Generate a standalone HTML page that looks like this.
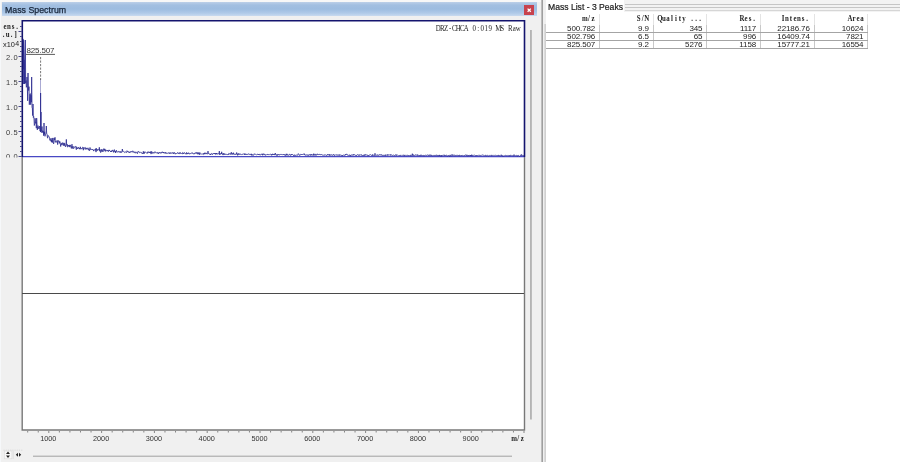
<!DOCTYPE html>
<html><head><meta charset="utf-8"><title>Mass Spectrum</title>
<style>
html,body{margin:0;padding:0;}
body{width:900px;height:462px;overflow:hidden;background:#f0f0f0;font-family:"Liberation Sans",sans-serif;position:relative;}
.abs{position:absolute;}
#ltitle{left:2px;top:2.2px;width:535px;height:14.3px;background:linear-gradient(#bccfe8 0%,#a2bfe1 22%,#9dbce0 50%,#b0cae8 80%,#c8daef 100%);}
#ltitle span{position:absolute;left:3px;top:3.3px;font-size:8.8px;line-height:11px;color:#17253a;-webkit-text-stroke:0.25px #17253a;white-space:pre;}
#close{left:524px;top:4.5px;width:10.4px;height:10px;background:#c7424d;}
#right{left:546px;top:0;width:354px;height:462px;background:#fff;}
#rtitle{left:548px;top:1.6px;font-size:8.6px;line-height:11px;color:#1c1c1c;-webkit-text-stroke:0.2px #1c1c1c;white-space:pre;}
.grip{left:625px;width:275px;height:1.2px;background:#c6c6c6;}
table{border-collapse:collapse;position:absolute;left:546px;top:13.8px;font-size:8px;color:#222;table-layout:fixed;width:322px;}
td,th{height:8px;line-height:8px;padding:0 4px 0 0;text-align:right;font-weight:normal;white-space:pre;overflow:hidden;letter-spacing:-0.12px;}
th{height:11px;line-height:11px;font-family:"Liberation Mono",monospace;font-size:7.4px;letter-spacing:-0.45px;border-right:1px solid #e4e4e4;}
td{border-right:1px solid #c8c8c8;border-bottom:1px solid #a4a4a4;height:7px;line-height:7px;}
svg text{font-family:"Liberation Sans",sans-serif;}
#wrap{position:absolute;left:0;top:0;width:900px;height:462px;will-change:transform;}
</style></head><body><div id="wrap">
<div class="abs" style="left:0;top:0;width:541px;height:2.2px;background:#f7f7f7"></div><div class="abs" style="left:0;top:0;width:1.2px;height:462px;background:#f6f8fa"></div><div class="abs" id="ltitle"><span>Mass Spectrum</span></div>
<div class="abs" id="close"><svg width="10.4" height="10" style="position:absolute;left:0;top:0"><path d="M3.6,3.6 L6.8,6.8 M6.8,3.6 L3.6,6.8" stroke="#fff" stroke-width="1.3"/></svg></div>
<svg class="abs" style="left:0;top:0" width="546" height="462" viewBox="0 0 546 462">
 <rect x="22" y="20.5" width="502.5" height="409.5" fill="#fff"/>
 <!-- lower grey frame -->
 <path d="M22.2,157 V430 H524.5 V157" fill="none" stroke="#787878" stroke-width="1.4"/>
 <line x1="22" y1="293.5" x2="524" y2="293.5" stroke="#4a4a4a" stroke-width="1.2"/>
 <!-- baseline -->
 <line x1="22" y1="156.7" x2="525" y2="156.7" stroke="#4848c4" stroke-width="1.3"/>
 <!-- spectrum -->
 <path d="M23.00,56.6 L23.33,40.5 L23.67,69.3 L24.00,59.8 L24.33,78.1 L24.67,83.5 L25.00,59.6 L25.33,40.0 L25.67,83.1 L26.00,80.5 L26.33,87.3 L26.67,85.9 L27.00,77.0 L27.33,85.9 L27.67,100.8 L28.00,73.0 L28.33,86.0 L28.67,90.5 L29.00,86.7 L29.33,104.7 L29.67,96.3 L30.00,93.9 L30.33,93.6 L30.67,104.7 L31.00,95.2 L31.33,102.2 L31.67,77.0 L32.00,107.4 L32.33,108.0 L32.67,115.6 L33.00,104.0 L33.33,117.5 L33.67,116.4 L34.00,119.0 L34.33,125.5 L34.67,123.4 L35.00,118.2 L35.33,118.8 L35.67,123.4 L36.00,121.9 L36.33,128.2 L36.67,118.1 L37.00,123.9 L37.33,129.9 L37.67,126.7 L38.00,125.6 L38.33,128.4 L38.67,127.6 L39.00,128.8 L39.33,126.0 L39.67,127.1 L40.00,131.1 L40.33,130.2 L40.67,129.8 L41.00,131.3 L41.33,130.0 L41.67,129.8 L42.00,126.5 L42.33,131.8 L42.67,130.7 L43.00,133.0 L43.33,131.4 L43.67,135.7 L44.00,123.0 L44.33,134.3 L44.67,131.8 L45.00,136.3 L45.33,134.0 L45.67,133.9 L46.00,133.3 L46.33,126.0 L46.67,133.6 L47.00,133.7 L47.33,137.1 L47.67,138.2 L48.00,135.4 L48.33,136.0 L48.67,136.0 L49.00,136.7 L49.33,137.1 L49.67,138.8 L50.00,140.4 L50.33,138.5 L50.67,138.9 L51.00,141.3 L51.33,140.0 L51.67,142.2 L52.00,138.1 L52.33,142.5 L52.67,141.0 L53.00,137.9 L53.33,143.1 L53.67,143.9 L54.00,142.0 L54.33,138.3 L54.67,139.9 L55.00,137.3 L55.33,141.7 L55.67,141.3 L56.00,142.6 L56.33,141.0 L56.67,140.9 L57.00,141.1 L57.33,140.6 L57.67,144.6 L58.00,140.7 L58.33,141.4 L58.67,140.6 L59.00,141.2 L59.33,143.4 L59.67,141.5 L60.00,141.5 L60.33,143.8 L60.67,146.5 L61.00,144.4 L61.33,143.2 L61.67,144.8 L62.00,145.0 L62.33,142.6 L62.67,143.8 L63.00,144.7 L63.33,145.6 L63.67,143.0 L64.00,142.7 L64.33,145.7 L64.67,143.3 L65.00,144.5 L65.33,146.4 L65.67,147.0 L66.00,144.8 L66.33,139.4 L66.67,145.0 L67.00,145.6 L67.33,144.4 L67.67,147.1 L68.00,147.0 L68.33,145.3 L68.67,146.1 L69.00,145.0 L69.33,145.0 L69.67,147.1 L70.00,145.1 L70.33,145.0 L70.67,146.7 L71.00,146.7 L71.33,148.4 L71.67,145.9 L72.00,144.2 L72.33,148.5 L72.67,147.1 L73.00,146.1 L73.33,147.6 L73.67,148.7 L74.00,147.2 L74.33,147.4 L74.67,146.7 L75.00,146.4 L75.33,146.5 L75.67,146.3 L76.00,148.3 L76.33,149.7 L76.67,146.8 L77.00,147.1 L77.33,147.7 L77.67,149.0 L78.00,148.4 L78.33,148.0 L78.67,147.2 L79.00,148.2 L79.33,149.1 L79.67,148.1 L80.00,149.2 L80.33,146.8 L80.67,148.2 L81.00,149.1 L81.33,148.5 L81.67,149.1 L82.00,148.4 L82.33,148.4 L82.67,147.2 L83.00,147.5 L83.33,150.2 L83.67,147.9 L84.00,147.2 L84.33,148.5 L84.67,148.8 L85.00,148.9 L85.33,149.4 L85.67,147.5 L86.00,147.8 L86.33,148.8 L86.67,148.2 L87.00,149.5 L87.33,148.3 L87.67,148.6 L88.00,147.8 L88.33,148.3 L88.67,150.1 L89.00,149.3 L89.33,150.8 L89.67,150.0 L90.00,147.5 L90.33,149.0 L90.67,149.7 L91.00,149.5 L91.33,149.1 L91.67,149.4 L92.00,150.0 L92.33,149.1 L92.67,149.6 L93.00,149.3 L93.33,149.8 L93.67,151.1 L94.00,149.9 L94.33,149.7 L94.67,149.8 L95.00,150.4 L95.33,150.2 L95.67,148.7 L96.00,152.1 L96.33,148.3 L96.67,149.4 L97.00,150.6 L97.33,149.4 L97.67,150.3 L98.00,150.3 L98.33,149.9 L98.67,149.5 L99.00,150.1 L99.33,147.3 L99.67,151.2 L100.00,149.6 L100.33,151.2 L100.67,152.6 L101.00,150.5 L101.33,149.3 L101.67,151.1 L102.00,151.8 L102.33,149.6 L102.67,150.4 L103.00,151.8 L103.33,149.9 L103.67,148.7 L104.00,149.7 L104.33,150.4 L104.67,148.8 L105.00,151.2 L105.33,151.5 L105.67,149.6 L106.00,150.7 L106.33,150.6 L106.67,150.8 L107.00,150.8 L107.33,150.1 L107.67,151.1 L108.00,150.6 L108.33,151.7 L108.67,151.2 L109.00,149.9 L109.33,151.0 L109.67,150.4 L110.00,150.6 L110.33,151.2 L110.67,152.0 L111.00,151.0 L111.33,151.9 L111.67,150.7 L112.00,151.4 L112.33,150.1 L112.67,150.0 L113.00,151.2 L113.33,151.0 L113.67,152.4 L114.00,150.3 L114.33,149.6 L114.67,151.4 L115.00,152.1 L115.33,151.0 L115.67,153.0 L116.00,151.6 L116.33,150.2 L116.67,151.6 L117.00,152.0 L117.33,152.0 L117.67,151.9 L118.00,151.6 L118.33,152.1 L118.67,151.4 L119.00,151.5 L119.33,152.4 L119.67,151.7 L120.00,152.1 L120.33,151.4 L120.67,152.6 L121.00,152.0 L121.33,152.5 L121.67,151.7 L122.00,152.1 L122.33,149.0 L122.67,151.2 L123.00,151.5 L123.33,151.1 L123.67,151.3 L124.00,152.2 L124.33,152.5 L124.67,152.3 L125.00,151.8 L125.33,151.7 L125.67,152.1 L126.00,152.7 L126.33,152.6 L126.67,151.9 L127.00,150.7 L127.33,151.3 L127.67,151.9 L128.00,151.3 L128.33,152.3 L128.67,151.8 L129.00,152.1 L129.33,152.9 L129.67,151.9 L130.00,151.6 L130.33,151.8 L130.67,152.4 L131.00,151.1 L131.33,151.7 L131.67,151.6 L132.00,151.3 L132.33,151.4 L132.67,150.8 L133.00,152.6 L133.33,152.3 L133.67,151.6 L134.00,151.8 L134.33,152.4 L134.67,152.6 L135.00,151.7 L135.33,153.2 L135.67,152.6 L136.00,152.6 L136.33,152.4 L136.67,152.3 L137.00,152.1 L137.33,153.7 L137.67,152.9 L138.00,151.6 L138.33,152.0 L138.67,151.4 L139.00,151.8 L139.33,152.6 L139.67,152.6 L140.00,152.3 L140.33,151.9 L140.67,152.3 L141.00,153.0 L141.33,152.7 L141.67,153.0 L142.00,152.8 L142.33,153.7 L142.67,153.0 L143.00,153.5 L143.33,151.3 L143.67,153.5 L144.00,152.8 L144.33,153.5 L144.67,151.9 L145.00,151.7 L145.33,152.3 L145.67,152.2 L146.00,152.4 L146.33,152.6 L146.67,153.2 L147.00,153.4 L147.33,153.4 L147.67,151.8 L148.00,152.4 L148.33,152.6 L148.67,151.7 L149.00,152.5 L149.33,152.2 L149.67,153.0 L150.00,152.0 L150.33,152.8 L150.67,151.5 L151.00,154.1 L151.33,153.2 L151.67,151.4 L152.00,152.3 L152.33,153.4 L152.67,152.9 L153.00,152.2 L153.33,153.3 L153.67,152.7 L154.00,153.0 L154.33,153.0 L154.67,152.9 L155.00,151.6 L155.33,152.4 L155.67,152.8 L156.00,152.8 L156.33,152.9 L156.67,152.7 L157.00,153.1 L157.33,152.3 L157.67,152.5 L158.00,153.8 L158.33,153.5 L158.67,154.0 L159.00,152.2 L159.33,152.7 L159.67,152.2 L160.00,152.7 L160.33,153.3 L160.67,153.1 L161.00,152.3 L161.33,153.0 L161.67,153.2 L162.00,151.9 L162.33,151.8 L162.67,152.3 L163.00,153.0 L163.33,152.0 L163.67,153.0 L164.00,153.1 L164.33,152.5 L164.67,153.3 L165.00,152.5 L165.33,152.7 L165.67,152.2 L166.00,153.8 L166.33,153.4 L166.67,152.8 L167.00,152.9 L167.33,153.1 L167.67,153.4 L168.00,153.3 L168.33,153.2 L168.67,152.7 L169.00,152.7 L169.33,153.7 L169.67,152.8 L170.00,152.9 L170.33,153.6 L170.67,152.6 L171.00,153.1 L171.33,152.9 L171.67,153.4 L172.00,152.7 L172.33,152.7 L172.67,152.8 L173.00,152.8 L173.33,153.8 L173.67,152.6 L174.00,153.6 L174.33,152.6 L174.67,152.5 L175.00,153.4 L175.33,154.2 L175.67,153.5 L176.00,153.5 L176.33,154.0 L176.67,153.6 L177.00,153.6 L177.33,152.8 L177.67,152.5 L178.00,152.4 L178.33,153.7 L178.67,153.4 L179.00,153.0 L179.33,153.9 L179.67,153.6 L180.00,152.2 L180.33,153.1 L180.67,153.6 L181.00,153.0 L181.33,153.3 L181.67,153.6 L182.00,153.7 L182.33,153.9 L182.67,152.5 L183.00,152.8 L183.33,153.9 L183.67,152.9 L184.00,153.4 L184.33,152.7 L184.67,152.6 L185.00,153.2 L185.33,153.9 L185.67,153.8 L186.00,153.7 L186.33,154.2 L186.67,152.4 L187.00,153.5 L187.33,154.1 L187.67,153.2 L188.00,154.0 L188.33,153.6 L188.67,152.7 L189.00,153.2 L189.33,154.2 L189.67,154.0 L190.00,153.3 L190.33,153.4 L190.67,153.6 L191.00,153.4 L191.33,153.5 L191.67,153.1 L192.00,152.5 L192.33,153.1 L192.67,153.2 L193.00,154.0 L193.33,153.6 L193.67,154.2 L194.00,153.5 L194.33,153.8 L194.67,153.2 L195.00,153.6 L195.33,152.6 L195.67,153.2 L196.00,152.9 L196.33,152.6 L196.67,153.4 L197.00,152.4 L197.33,154.2 L197.67,154.0 L198.00,152.6 L198.33,153.4 L198.67,154.1 L199.00,152.5 L199.33,154.8 L199.67,153.3 L200.00,152.7 L200.33,153.8 L200.67,154.1 L201.00,153.8 L201.33,154.0 L201.67,153.9 L202.00,153.7 L202.33,153.8 L202.67,154.1 L203.00,154.2 L203.33,154.5 L203.67,153.3 L204.00,154.2 L204.33,153.1 L204.67,154.1 L205.00,152.6 L205.33,153.0 L205.67,153.9 L206.00,153.8 L206.33,153.8 L206.67,152.9 L207.00,153.8 L207.33,154.2 L207.67,153.4 L208.00,151.1 L208.33,153.6 L208.67,153.3 L209.00,154.1 L209.33,154.1 L209.67,154.2 L210.00,154.4 L210.33,153.9 L210.67,155.0 L211.00,154.0 L211.33,153.5 L211.67,153.3 L212.00,153.7 L212.33,154.7 L212.67,154.2 L213.00,153.9 L213.33,153.2 L213.67,153.7 L214.00,153.7 L214.33,153.0 L214.67,153.9 L215.00,154.0 L215.33,153.1 L215.67,154.5 L216.00,154.2 L216.33,153.0 L216.67,154.2 L217.00,153.3 L217.33,154.1 L217.67,154.1 L218.00,154.0 L218.33,153.7 L218.67,153.9 L219.00,154.1 L219.33,151.1 L219.67,154.8 L220.00,153.9 L220.33,154.3 L220.67,153.9 L221.00,153.0 L221.33,154.1 L221.67,151.8 L222.00,154.0 L222.33,154.0 L222.67,153.7 L223.00,155.1 L223.33,153.8 L223.67,153.2 L224.00,154.6 L224.33,153.6 L224.67,154.4 L225.00,154.9 L225.33,154.5 L225.67,153.9 L226.00,154.0 L226.33,154.4 L226.67,154.3 L227.00,154.2 L227.33,154.5 L227.67,154.0 L228.00,154.5 L228.33,154.9 L228.67,153.5 L229.00,153.8 L229.33,153.8 L229.67,154.1 L230.00,153.5 L230.33,154.5 L230.67,153.5 L231.00,153.2 L231.33,152.2 L231.67,154.3 L232.00,153.7 L232.33,154.5 L232.67,153.5 L233.00,154.0 L233.33,152.7 L233.67,154.4 L234.00,153.7 L234.33,154.3 L234.67,154.5 L235.00,154.0 L235.33,153.9 L235.67,154.6 L236.00,154.0 L236.33,154.3 L236.67,152.5 L237.00,154.1 L237.33,153.8 L237.67,155.4 L238.00,154.0 L238.33,154.4 L238.67,153.4 L239.00,154.5 L239.33,153.8 L239.67,154.0 L240.00,154.6 L240.33,154.0 L240.67,154.0 L241.00,153.9 L241.33,154.4 L241.67,154.6 L242.00,154.5 L242.33,154.2 L242.67,154.5 L243.00,154.6 L243.33,154.0 L243.67,153.8 L244.00,154.1 L244.33,153.8 L244.67,154.9 L245.00,153.6 L245.33,154.5 L245.67,154.6 L246.00,153.9 L246.33,154.5 L246.67,154.3 L247.00,155.0 L247.33,154.7 L247.67,154.2 L248.00,153.7 L248.33,154.0 L248.67,154.0 L249.00,154.1 L249.33,154.4 L249.67,153.9 L250.00,154.8 L250.33,154.5 L250.67,154.7 L251.00,154.9 L251.33,153.8 L251.67,155.4 L252.00,154.1 L252.33,154.7 L252.67,154.9 L253.00,155.5 L253.33,154.8 L253.67,154.8 L254.00,154.6 L254.33,153.7 L254.67,154.4 L255.00,154.1 L255.33,154.3 L255.67,154.3 L256.00,154.5 L256.33,154.7 L256.67,154.7 L257.00,154.4 L257.33,154.2 L257.67,154.4 L258.00,155.0 L258.33,154.1 L258.67,154.7 L259.00,154.1 L259.33,154.2 L259.67,155.0 L260.00,155.1 L260.33,155.1 L260.67,155.0 L261.00,154.1 L261.33,153.9 L261.67,154.5 L262.00,154.1 L262.33,154.0 L262.67,155.3 L263.00,153.8 L263.33,154.4 L263.67,153.9 L264.00,153.7 L264.33,155.0 L264.67,154.7 L265.00,154.3 L265.33,155.3 L265.67,155.1 L266.00,155.1 L266.33,154.7 L266.67,155.1 L267.00,154.5 L267.33,154.4 L267.67,154.8 L268.00,154.1 L268.33,154.7 L268.67,154.6 L269.00,154.3 L269.33,154.6 L269.67,154.5 L270.00,154.7 L270.33,154.4 L270.67,154.3 L271.00,154.6 L271.33,155.3 L271.67,154.2 L272.00,155.2 L272.33,154.8 L272.67,153.8 L273.00,154.9 L273.33,154.3 L273.67,155.0 L274.00,154.5 L274.33,155.1 L274.67,154.1 L275.00,154.4 L275.33,153.1 L275.67,154.8 L276.00,154.7 L276.33,155.1 L276.67,154.5 L277.00,155.9 L277.33,155.2 L277.67,154.3 L278.00,154.1 L278.33,154.6 L278.67,155.1 L279.00,154.2 L279.33,154.9 L279.67,155.0 L280.00,154.8 L280.33,154.5 L280.67,154.5 L281.00,154.0 L281.33,154.6 L281.67,154.5 L282.00,154.8 L282.33,154.7 L282.67,154.9 L283.00,154.3 L283.33,154.5 L283.67,155.0 L284.00,154.3 L284.33,154.8 L284.67,155.3 L285.00,154.4 L285.33,155.2 L285.67,155.7 L286.00,155.5 L286.33,153.8 L286.67,155.2 L287.00,154.4 L287.33,154.2 L287.67,155.3 L288.00,155.0 L288.33,154.9 L288.67,155.4 L289.00,154.6 L289.33,154.7 L289.67,154.2 L290.00,154.2 L290.33,154.7 L290.67,155.6 L291.00,155.3 L291.33,154.1 L291.67,154.8 L292.00,154.4 L292.33,154.9 L292.67,154.4 L293.00,154.9 L293.33,155.4 L293.67,155.6 L294.00,156.1 L294.33,154.9 L294.67,154.9 L295.00,155.1 L295.33,155.6 L295.67,155.0 L296.00,155.0 L296.33,155.0 L296.67,155.2 L297.00,154.9 L297.33,154.8 L297.67,155.4 L298.00,154.7 L298.33,153.6 L298.67,154.2 L299.00,154.7 L299.33,154.7 L299.67,155.5 L300.00,155.5 L300.33,154.8 L300.67,154.4 L301.00,154.7 L301.33,154.0 L301.67,154.6 L302.00,155.0 L302.33,154.4 L302.67,154.5 L303.00,154.5 L303.33,154.2 L303.67,154.3 L304.00,154.5 L304.33,153.7 L304.67,155.1 L305.00,154.7 L305.33,155.2 L305.67,155.2 L306.00,155.4 L306.33,154.8 L306.67,155.0 L307.00,155.2 L307.33,154.7 L307.67,155.2 L308.00,155.8 L308.33,154.7 L308.67,155.3 L309.00,155.2 L309.33,155.0 L309.67,154.5 L310.00,155.1 L310.33,155.5 L310.67,154.4 L311.00,154.3 L311.33,155.3 L311.67,154.3 L312.00,155.1 L312.33,155.0 L312.67,155.2 L313.00,154.7 L313.33,155.4 L313.67,153.7 L314.00,155.3 L314.33,155.3 L314.67,154.9 L315.00,153.9 L315.33,155.2 L315.67,154.7 L316.00,155.5 L316.33,154.6 L316.67,154.8 L317.00,154.7 L317.33,153.8 L317.67,154.7 L318.00,154.7 L318.33,154.7 L318.67,154.5 L319.00,155.0 L319.33,154.3 L319.67,154.0 L320.00,154.4 L320.33,155.1 L320.67,154.6 L321.00,154.5 L321.33,154.5 L321.67,154.6 L322.00,154.6 L322.33,155.3 L322.67,155.0 L323.00,155.1 L323.33,154.9 L323.67,155.4 L324.00,155.2 L324.33,154.9 L324.67,155.2 L325.00,155.4 L325.33,154.7 L325.67,155.1 L326.00,155.0 L326.33,155.1 L326.67,155.6 L327.00,154.8 L327.33,155.0 L327.67,154.3 L328.00,155.1 L328.33,154.9 L328.67,154.7 L329.00,155.2 L329.33,154.3 L329.67,155.6 L330.00,154.7 L330.33,155.2 L330.67,155.0 L331.00,154.7 L331.33,155.3 L331.67,154.6 L332.00,155.1 L332.33,155.4 L332.67,155.1 L333.00,155.3 L333.33,154.8 L333.67,154.1 L334.00,154.7 L334.33,155.9 L334.67,155.6 L335.00,155.3 L335.33,154.8 L335.67,155.2 L336.00,154.6 L336.33,154.9 L336.67,155.0 L337.00,154.9 L337.33,155.4 L337.67,155.2 L338.00,154.5 L338.33,154.9 L338.67,155.4 L339.00,154.9 L339.33,155.6 L339.67,154.5 L340.00,154.9 L340.33,155.1 L340.67,155.1 L341.00,155.1 L341.33,155.1 L341.67,155.5 L342.00,156.1 L342.33,155.0 L342.67,155.5 L343.00,155.5 L343.33,154.9 L343.67,155.1 L344.00,155.2 L344.33,155.3 L344.67,155.5 L345.00,155.4 L345.33,154.2 L345.67,155.0 L346.00,154.7 L346.33,154.5 L346.67,153.9 L347.00,154.9 L347.33,154.7 L347.67,155.3 L348.00,155.1 L348.33,155.3 L348.67,155.3 L349.00,155.2 L349.33,155.4 L349.67,154.7 L350.00,155.8 L350.33,155.4 L350.67,156.2 L351.00,155.0 L351.33,155.1 L351.67,154.8 L352.00,155.1 L352.33,155.0 L352.67,155.2 L353.00,155.5 L353.33,154.3 L353.67,155.2 L354.00,155.0 L354.33,154.5 L354.67,155.1 L355.00,155.2 L355.33,155.4 L355.67,155.2 L356.00,155.1 L356.33,155.8 L356.67,155.1 L357.00,154.9 L357.33,154.7 L357.67,154.7 L358.00,154.6 L358.33,155.4 L358.67,155.2 L359.00,155.4 L359.33,154.6 L359.67,155.4 L360.00,155.2 L360.33,154.8 L360.67,154.8 L361.00,155.2 L361.33,154.7 L361.67,154.7 L362.00,155.7 L362.33,155.2 L362.67,155.6 L363.00,155.1 L363.33,155.4 L363.67,155.6 L364.00,154.7 L364.33,155.6 L364.67,154.7 L365.00,155.5 L365.33,155.3 L365.67,154.5 L366.00,154.6 L366.33,155.0 L366.67,155.3 L367.00,154.8 L367.33,155.2 L367.67,155.0 L368.00,156.1 L368.33,155.6 L368.67,155.1 L369.00,155.6 L369.33,155.0 L369.67,154.8 L370.00,155.0 L370.33,154.6 L370.67,154.8 L371.00,155.0 L371.33,155.4 L371.67,155.3 L372.00,155.5 L372.33,156.0 L372.67,154.5 L373.00,154.5 L373.33,155.2 L373.67,155.6 L374.00,155.5 L374.33,155.9 L374.67,154.6 L375.00,153.3 L375.33,155.1 L375.67,155.7 L376.00,155.3 L376.33,155.1 L376.67,155.2 L377.00,155.0 L377.33,155.5 L377.67,154.6 L378.00,155.2 L378.33,155.5 L378.67,155.3 L379.00,155.1 L379.33,154.5 L379.67,155.2 L380.00,154.8 L380.33,155.2 L380.67,154.7 L381.00,155.2 L381.33,154.5 L381.67,155.3 L382.00,154.9 L382.33,155.1 L382.67,155.7 L383.00,155.2 L383.33,155.0 L383.67,155.5 L384.00,155.0 L384.33,155.4 L384.67,155.1 L385.00,155.6 L385.33,154.7 L385.67,155.7 L386.00,155.6 L386.33,154.8 L386.67,155.2 L387.00,155.1 L387.33,155.4 L387.67,154.4 L388.00,155.5 L388.33,154.9 L388.67,154.8 L389.00,154.9 L389.33,154.8 L389.67,154.9 L390.00,155.4 L390.33,155.4 L390.67,154.4 L391.00,155.3 L391.33,155.2 L391.67,154.9 L392.00,155.0 L392.33,155.2 L392.67,155.7 L393.00,155.2 L393.33,155.1 L393.67,154.9 L394.00,155.5 L394.33,155.6 L394.67,155.4 L395.00,155.8 L395.33,155.2 L395.67,155.0 L396.00,154.4 L396.33,155.7 L396.67,155.2 L397.00,155.1 L397.33,155.0 L397.67,155.3 L398.00,155.5 L398.33,155.6 L398.67,155.2 L399.00,155.6 L399.33,155.5 L399.67,155.4 L400.00,155.0 L400.33,155.7 L400.67,155.1 L401.00,155.1 L401.33,155.4 L401.67,155.1 L402.00,155.5 L402.33,155.4 L402.67,155.1 L403.00,155.5 L403.33,155.4 L403.67,154.9 L404.00,155.0 L404.33,156.1 L404.67,155.3 L405.00,154.9 L405.33,155.3 L405.67,155.6 L406.00,155.6 L406.33,155.8 L406.67,155.3 L407.00,155.5 L407.33,155.3 L407.67,155.0 L408.00,155.9 L408.33,155.7 L408.67,155.3 L409.00,155.7 L409.33,155.3 L409.67,155.7 L410.00,155.3 L410.33,155.0 L410.67,155.9 L411.00,155.6 L411.33,155.9 L411.67,155.3 L412.00,155.5 L412.33,153.7 L412.67,155.7 L413.00,155.4 L413.33,154.6 L413.67,155.8 L414.00,155.4 L414.33,155.5 L414.67,155.4 L415.00,155.1 L415.33,154.8 L415.67,155.4 L416.00,154.7 L416.33,155.1 L416.67,155.0 L417.00,155.7 L417.33,155.7 L417.67,154.6 L418.00,154.8 L418.33,155.7 L418.67,155.9 L419.00,155.5 L419.33,155.1 L419.67,155.7 L420.00,156.1 L420.33,155.1 L420.67,155.5 L421.00,154.7 L421.33,155.5 L421.67,155.6 L422.00,155.1 L422.33,155.7 L422.67,155.4 L423.00,155.1 L423.33,155.4 L423.67,155.2 L424.00,156.2 L424.33,155.5 L424.67,155.6 L425.00,155.2 L425.33,155.1 L425.67,155.1 L426.00,155.8 L426.33,155.5 L426.67,155.4 L427.00,154.9 L427.33,155.1 L427.67,154.8 L428.00,155.6 L428.33,155.5 L428.67,155.6 L429.00,154.8 L429.33,155.7 L429.67,155.3 L430.00,154.7 L430.33,155.6 L430.67,155.4 L431.00,154.8 L431.33,155.8 L431.67,155.2 L432.00,155.7 L432.33,155.7 L432.67,155.6 L433.00,155.4 L433.33,155.4 L433.67,155.5 L434.00,155.3 L434.33,155.9 L434.67,155.3 L435.00,155.2 L435.33,155.2 L435.67,155.8 L436.00,155.4 L436.33,155.4 L436.67,154.8 L437.00,155.6 L437.33,155.1 L437.67,155.7 L438.00,155.6 L438.33,155.8 L438.67,155.3 L439.00,155.9 L439.33,154.9 L439.67,155.8 L440.00,155.1 L440.33,155.5 L440.67,156.3 L441.00,155.9 L441.33,155.2 L441.67,156.4 L442.00,155.6 L442.33,155.0 L442.67,155.4 L443.00,155.6 L443.33,155.6 L443.67,155.1 L444.00,154.7 L444.33,155.1 L444.67,156.0 L445.00,155.6 L445.33,156.0 L445.67,155.4 L446.00,154.9 L446.33,155.2 L446.67,155.4 L447.00,155.5 L447.33,156.3 L447.67,155.8 L448.00,155.5 L448.33,155.0 L448.67,155.7 L449.00,155.6 L449.33,155.3 L449.67,156.5 L450.00,155.6 L450.33,155.8 L450.67,154.9 L451.00,155.6 L451.33,155.9 L451.67,155.5 L452.00,154.4 L452.33,155.1 L452.67,155.7 L453.00,154.8 L453.33,155.4 L453.67,155.3 L454.00,155.4 L454.33,155.7 L454.67,154.8 L455.00,155.3 L455.33,155.6 L455.67,156.0 L456.00,155.4 L456.33,155.0 L456.67,155.3 L457.00,155.9 L457.33,155.4 L457.67,155.2 L458.00,155.1 L458.33,155.5 L458.67,155.1 L459.00,156.1 L459.33,155.8 L459.67,155.0 L460.00,155.3 L460.33,155.6 L460.67,155.5 L461.00,155.6 L461.33,155.2 L461.67,155.8 L462.00,155.1 L462.33,155.4 L462.67,155.4 L463.00,155.4 L463.33,155.7 L463.67,155.7 L464.00,155.9 L464.33,155.6 L464.67,155.0 L465.00,155.5 L465.33,154.8 L465.67,155.0 L466.00,154.9 L466.33,155.0 L466.67,155.7 L467.00,154.8 L467.33,155.8 L467.67,155.9 L468.00,155.8 L468.33,155.2 L468.67,156.1 L469.00,155.6 L469.33,155.1 L469.67,155.3 L470.00,155.9 L470.33,155.0 L470.67,156.0 L471.00,155.5 L471.33,155.9 L471.67,154.7 L472.00,156.2 L472.33,155.2 L472.67,155.4 L473.00,155.8 L473.33,155.5 L473.67,155.3 L474.00,155.1 L474.33,155.2 L474.67,155.1 L475.00,155.2 L475.33,155.4 L475.67,155.9 L476.00,156.2 L476.33,155.3 L476.67,155.9 L477.00,155.3 L477.33,155.5 L477.67,155.5 L478.00,155.5 L478.33,155.4 L478.67,155.1 L479.00,155.6 L479.33,155.5 L479.67,154.9 L480.00,155.4 L480.33,155.5 L480.67,155.5 L481.00,155.4 L481.33,155.2 L481.67,155.6 L482.00,155.3 L482.33,155.0 L482.67,155.1 L483.00,155.4 L483.33,155.5 L483.67,155.0 L484.00,155.3 L484.33,155.6 L484.67,155.6 L485.00,155.6 L485.33,155.7 L485.67,154.9 L486.00,155.7 L486.33,155.9 L486.67,155.6 L487.00,155.5 L487.33,155.6 L487.67,155.2 L488.00,155.5 L488.33,156.2 L488.67,155.9 L489.00,156.1 L489.33,155.5 L489.67,155.3 L490.00,155.0 L490.33,155.3 L490.67,155.5 L491.00,155.9 L491.33,155.9 L491.67,154.9 L492.00,155.3 L492.33,155.4 L492.67,155.5 L493.00,155.4 L493.33,155.5 L493.67,155.4 L494.00,155.6 L494.33,155.5 L494.67,155.4 L495.00,155.4 L495.33,155.3 L495.67,155.3 L496.00,155.2 L496.33,155.6 L496.67,155.5 L497.00,155.6 L497.33,155.5 L497.67,155.9 L498.00,155.3 L498.33,155.9 L498.67,155.2 L499.00,155.5 L499.33,155.6 L499.67,155.5 L500.00,156.1 L500.33,155.4 L500.67,155.2 L501.00,154.8 L501.33,154.9 L501.67,155.8 L502.00,155.2 L502.33,156.2 L502.67,155.9 L503.00,156.0 L503.33,156.3 L503.67,155.7 L504.00,155.6 L504.33,155.7 L504.67,155.8 L505.00,155.4 L505.33,155.2 L505.67,155.6 L506.00,155.2 L506.33,155.4 L506.67,155.7 L507.00,155.5 L507.33,155.7 L507.67,155.3 L508.00,155.1 L508.33,155.3 L508.67,155.7 L509.00,156.2 L509.33,155.7 L509.67,155.3 L510.00,156.1 L510.33,155.4 L510.67,155.3 L511.00,155.6 L511.33,155.2 L511.67,155.5 L512.00,156.0 L512.33,155.8 L512.67,155.5 L513.00,155.5 L513.33,155.7 L513.67,156.0 L514.00,154.6 L514.33,155.6 L514.67,155.5 L515.00,155.8 L515.33,155.6 L515.67,155.7 L516.00,155.4 L516.33,155.3 L516.67,155.9 L517.00,156.0 L517.33,156.4 L517.67,155.3 L518.00,155.8 L518.33,155.5 L518.67,155.7 L519.00,155.6 L519.33,156.0 L519.67,156.5 L520.00,156.0 L520.33,155.5 L520.67,155.2 L521.00,155.8 L521.33,154.4 L521.67,155.7 L522.00,155.5 L522.33,155.4 L522.67,155.3 L523.00,155.9 L523.33,155.5 L523.67,155.6 L524.00,155.6" fill="none" stroke="#2b2b8f" stroke-width="0.8" stroke-linejoin="round"/>
 <!-- left-edge peaks (500.8 / 502.8) -->
 <path d="M23,84 V38.5 L24.2,40 L24.8,60 L25.6,78 L25.2,84 Z" fill="#2b2b8f" opacity="0.85"/>
 <!-- 825.5 peak -->
 <line x1="40.6" y1="79" x2="40.6" y2="94" stroke="#2b2b8f" stroke-width="0.8" opacity="0.55"/>
 <line x1="40.6" y1="93" x2="40.6" y2="132" stroke="#2b2b8f" stroke-width="1.1"/>
 <line x1="41.4" y1="112" x2="41.4" y2="133" stroke="#2b2b8f" stroke-width="0.7"/>
 <!-- upper blue frame -->
 <path d="M22.3,157 V20.75 H524.5 V157" fill="none" stroke="#14146e" stroke-width="1.6"/>
 <g stroke="#14146e" stroke-width="0.75"><line x1="18.5" y1="156.5" x2="21.6" y2="156.5"/><line x1="20" y1="151.5" x2="21.6" y2="151.5"/><line x1="20" y1="146.5" x2="21.6" y2="146.5"/><line x1="20" y1="141.5" x2="21.6" y2="141.5"/><line x1="20" y1="136.5" x2="21.6" y2="136.5"/><line x1="18.5" y1="131.5" x2="21.6" y2="131.5"/><line x1="20" y1="126.5" x2="21.6" y2="126.5"/><line x1="20" y1="121.5" x2="21.6" y2="121.5"/><line x1="20" y1="116.5" x2="21.6" y2="116.5"/><line x1="20" y1="111.5" x2="21.6" y2="111.5"/><line x1="18.5" y1="106.5" x2="21.6" y2="106.5"/><line x1="20" y1="101.5" x2="21.6" y2="101.5"/><line x1="20" y1="96.5" x2="21.6" y2="96.5"/><line x1="20" y1="91.5" x2="21.6" y2="91.5"/><line x1="20" y1="86.5" x2="21.6" y2="86.5"/><line x1="18.5" y1="81.5" x2="21.6" y2="81.5"/><line x1="20" y1="76.5" x2="21.6" y2="76.5"/><line x1="20" y1="71.5" x2="21.6" y2="71.5"/><line x1="20" y1="66.5" x2="21.6" y2="66.5"/><line x1="20" y1="61.5" x2="21.6" y2="61.5"/><line x1="18.5" y1="56.5" x2="21.6" y2="56.5"/><line x1="20" y1="51.5" x2="21.6" y2="51.5"/><line x1="20" y1="46.5" x2="21.6" y2="46.5"/><line x1="20" y1="41.5" x2="21.6" y2="41.5"/><line x1="20" y1="36.5" x2="21.6" y2="36.5"/><line x1="18.5" y1="31.5" x2="21.6" y2="31.5"/><line x1="20" y1="26.5" x2="21.6" y2="26.5"/></g>
 <g fill="#858585"><rect x="27.18" y="431" width="1" height="1.5"/><rect x="37.74" y="431" width="1" height="1.5"/><rect x="48.30" y="431" width="1" height="2"/><rect x="58.86" y="431" width="1" height="1.5"/><rect x="69.42" y="431" width="1" height="1.5"/><rect x="79.98" y="431" width="1" height="1.5"/><rect x="90.54" y="431" width="1" height="1.5"/><rect x="101.10" y="431" width="1" height="2"/><rect x="111.66" y="431" width="1" height="1.5"/><rect x="122.22" y="431" width="1" height="1.5"/><rect x="132.78" y="431" width="1" height="1.5"/><rect x="143.34" y="431" width="1" height="1.5"/><rect x="153.90" y="431" width="1" height="2"/><rect x="164.46" y="431" width="1" height="1.5"/><rect x="175.02" y="431" width="1" height="1.5"/><rect x="185.58" y="431" width="1" height="1.5"/><rect x="196.14" y="431" width="1" height="1.5"/><rect x="206.70" y="431" width="1" height="2"/><rect x="217.26" y="431" width="1" height="1.5"/><rect x="227.82" y="431" width="1" height="1.5"/><rect x="238.38" y="431" width="1" height="1.5"/><rect x="248.94" y="431" width="1" height="1.5"/><rect x="259.50" y="431" width="1" height="2"/><rect x="270.06" y="431" width="1" height="1.5"/><rect x="280.62" y="431" width="1" height="1.5"/><rect x="291.18" y="431" width="1" height="1.5"/><rect x="301.74" y="431" width="1" height="1.5"/><rect x="312.30" y="431" width="1" height="2"/><rect x="322.86" y="431" width="1" height="1.5"/><rect x="333.42" y="431" width="1" height="1.5"/><rect x="343.98" y="431" width="1" height="1.5"/><rect x="354.54" y="431" width="1" height="1.5"/><rect x="365.10" y="431" width="1" height="2"/><rect x="375.66" y="431" width="1" height="1.5"/><rect x="386.22" y="431" width="1" height="1.5"/><rect x="396.78" y="431" width="1" height="1.5"/><rect x="407.34" y="431" width="1" height="1.5"/><rect x="417.90" y="431" width="1" height="2"/><rect x="428.46" y="431" width="1" height="1.5"/><rect x="439.02" y="431" width="1" height="1.5"/><rect x="449.58" y="431" width="1" height="1.5"/><rect x="460.14" y="431" width="1" height="1.5"/><rect x="470.70" y="431" width="1" height="2"/><rect x="481.26" y="431" width="1" height="1.5"/><rect x="491.82" y="431" width="1" height="1.5"/><rect x="502.38" y="431" width="1" height="1.5"/><rect x="512.94" y="431" width="1" height="1.5"/><rect x="523.50" y="431" width="1" height="2"/></g>
 <g font-size="7.3" fill="#333" text-anchor="middle"><text x="48.3" y="440.5">1000</text><text x="101.1" y="440.5">2000</text><text x="153.9" y="440.5">3000</text><text x="206.7" y="440.5">4000</text><text x="259.5" y="440.5">5000</text><text x="312.3" y="440.5">6000</text><text x="365.1" y="440.5">7000</text><text x="417.9" y="440.5">8000</text><text x="470.7" y="440.5">9000</text></g>
 <g font-size="7.5" fill="#3a3a3a">
  <text x="6" y="59.7" textLength="11.6" lengthAdjust="spacing">2.0</text><text x="6" y="84.7" textLength="11.6" lengthAdjust="spacing">1.5</text><text x="6" y="109.7" textLength="11.6" lengthAdjust="spacing">1.0</text><text x="6" y="134.7" textLength="11.6" lengthAdjust="spacing">0.5</text>
 </g>
 <!-- 0.0 clipped -->
 <svg x="0" y="150" width="19" height="7.6" viewBox="0 150 19 7.6"><text x="6" y="159.2" font-size="7.5" fill="#3a3a3a" textLength="11.6" lengthAdjust="spacing">0.0</text></svg>
 <text transform="scale(0.82,1)" x="6.10 10.98 15.85 20.73" y="29.3" font-size="8.4" fill="#222" text-anchor="middle" style="font-family:'Liberation Serif',serif;font-weight:bold">ens.</text><text transform="scale(0.82,1)" x="4.39 9.27 14.15 19.02" y="36.8" font-size="8.4" fill="#222" text-anchor="middle" style="font-family:'Liberation Serif',serif;font-weight:bold">.u.]</text>
 <text x="3" y="47" font-size="7.4" fill="#222">x10</text><text x="15.2" y="45.6" font-size="7" fill="#222">4</text>
 <!-- peak label -->
 <text x="26.5" y="53.1" font-size="8" fill="#333" letter-spacing="-0.15">825.507</text>
 <line x1="26" y1="54.4" x2="55" y2="54.4" stroke="#333" stroke-width="0.8"/>
 <line x1="40.6" y1="57" x2="40.6" y2="80" stroke="#555" stroke-width="0.8" stroke-dasharray="2.2,1.3"/>
 <text transform="scale(0.82,1)" x="534.39 539.27 544.15 549.02 553.90 558.78 563.66 568.54 573.41 578.29 583.17 588.05 592.93 597.80 602.68 607.56 612.44 617.32 622.20 627.07 631.95" y="31" font-size="8.4" fill="#222" text-anchor="middle" style="font-family:'Liberation Serif',serif">DRZ-CHCA 0:019 MS Raw</text>
 <text transform="scale(0.82,1)" x="627.07 631.95 636.83" y="440.6" font-size="8.4" fill="#222" text-anchor="middle" style="font-family:'Liberation Serif',serif;font-weight:bold">m/z</text>
 <!-- vertical slider -->
 <rect x="530.3" y="30" width="1.3" height="389.5" fill="#9a9a9a"/>
 <!-- splitter -->
 <rect x="541.5" y="0" width="1.3" height="462" fill="#8c8c8c"/>
 <rect x="544.6" y="24" width="1" height="438" fill="#bdbdbd"/>
 <!-- bottom controls -->
 <line x1="3.5" y1="450.2" x2="22.5" y2="450.2" stroke="#d4d4d4" stroke-width="0.8" stroke-dasharray="1.2,1"/>
 <rect x="4.3" y="451" width="7.6" height="7.8" fill="#f8f8f8" stroke="#dadada" stroke-width="0.6"/>
 <line x1="13.2" y1="451" x2="13.2" y2="459" stroke="#dcdcdc" stroke-width="0.8"/>
 <path d="M6,454 L8,451.6 L10,454 Z M6,455.6 L8,458 L10,455.6 Z" fill="#222"/>
 <path d="M18,452.8 L15.8,454.8 L18,456.8 Z M19,452.8 L21.2,454.8 L19,456.8 Z" fill="#222"/>
 <line x1="33" y1="456.2" x2="512" y2="456.2" stroke="#a0a0a0" stroke-width="1"/>
</svg>
<div class="abs" id="right"></div>
<div class="abs" id="rtitle">Mass List - 3 Peaks</div>
<div class="abs" style="left:624px;top:0;width:276px;height:11.5px;background:#f3f3f3"></div>
<div class="abs grip" style="top:4.1px"></div><div class="abs grip" style="top:6.8px"></div><div class="abs grip" style="top:9.5px;background:#d6d6d6"></div>
<table>
<colgroup><col style="width:53.7px"><col style="width:53.6px"><col style="width:53.6px"><col style="width:53.7px"><col style="width:53.7px"><col style="width:53.7px"></colgroup>
<tr><th></th><th></th><th></th><th></th><th></th><th></th></tr>
<tr><td>500.782</td><td>9.9</td><td>345</td><td>1117</td><td>22186.76</td><td>10624</td></tr>
<tr><td>502.796</td><td>6.5</td><td>65</td><td>996</td><td>16409.74</td><td>7821</td></tr>
<tr><td>825.507</td><td>9.2</td><td>5276</td><td>1158</td><td>15777.21</td><td>16554</td></tr>
</table>
<svg class="abs" style="left:546px;top:12px" width="354" height="12" viewBox="546 12 354 12">
<text transform="scale(0.82,1)" x="713.41 718.29 723.17" y="21.3" font-size="8.4" fill="#222" text-anchor="middle" style="font-family:'Liberation Serif',serif;font-weight:bold">m/z</text><text transform="scale(0.82,1)" x="779.02 783.90 788.78" y="21.3" font-size="8.4" fill="#222" text-anchor="middle" style="font-family:'Liberation Serif',serif;font-weight:bold">S/N</text><text transform="scale(0.82,1)" x="804.88 809.76 814.63 819.51 824.39 829.27 834.15 839.02 843.90 848.78 853.66" y="21.3" font-size="8.4" fill="#222" text-anchor="middle" style="font-family:'Liberation Serif',serif;font-weight:bold">Quality ...</text><text transform="scale(0.82,1)" x="904.88 909.76 914.63 919.51" y="21.3" font-size="8.4" fill="#222" text-anchor="middle" style="font-family:'Liberation Serif',serif;font-weight:bold">Res.</text><text transform="scale(0.82,1)" x="954.88 959.76 964.63 969.51 974.39 979.27 984.15" y="21.3" font-size="8.4" fill="#222" text-anchor="middle" style="font-family:'Liberation Serif',serif;font-weight:bold">Intens.</text><text transform="scale(0.82,1)" x="1036.59 1041.46 1046.34 1051.22" y="21.3" font-size="8.4" fill="#222" text-anchor="middle" style="font-family:'Liberation Serif',serif;font-weight:bold">Area</text>
</svg>
</div></body></html>
